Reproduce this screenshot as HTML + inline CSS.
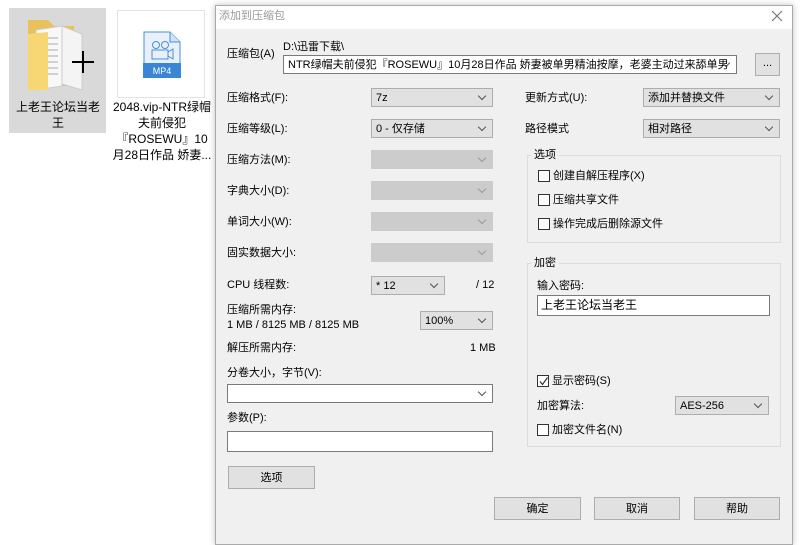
<!DOCTYPE html>
<html><head><meta charset="utf-8"><style>
*{margin:0;padding:0;box-sizing:border-box}
body{width:800px;height:532px;background:#fff;position:relative;overflow:hidden;font-family:"Liberation Sans","Noto Sans CJK SC",sans-serif;font-size:11px;color:#000;line-height:13px}
.a{position:absolute;white-space:nowrap}
.L{margin-top:2px}
.cb{position:absolute;height:19px;border:1px solid #adadad;background:#e1e1e1;padding:3px 0 0 4px;line-height:13px;font-size:11px;white-space:nowrap}
.cb.w{background:#fff;border-color:#7a7a7a}
.cb.d{background:#cccccc;border-color:#cccccc}
.cb:after{content:"";position:absolute;right:7px;top:4px;width:5px;height:5px;border-right:1px solid #555;border-bottom:1px solid #555;transform:rotate(45deg)}
.cb.d:after{border-color:#999}
.btn{position:absolute;height:23px;border:1px solid #adadad;background:#e1e1e1;text-align:center;line-height:22px}
.chk{position:absolute;width:12px;height:12px;border:1px solid #333;background:#fff}
.grp{position:absolute;border:1px solid #dcdcdc}
.gt{position:absolute;background:#f0f0f0;padding:0 3px}
</style></head><body>
<div class="a" style="left:9px;top:8px;width:97px;height:125px;background:#d9d9d9"></div>
<svg class="a" style="left:22px;top:14px" width="75" height="80" viewBox="0 0 75 80">
<path d="M6 6 h20 l6 6 h20 v60 h-46z" fill="#e9c15a"/>
<path d="M40 12 l20 8 v56 l-20 -6z" fill="#f4f4f4" stroke="#ccc"/>
<path d="M14 16 l26 -4 v60 l-26 4z" fill="#f8f8f8" stroke="#ccc"/>
<g stroke="#aaa" stroke-width="1"><path d="M18 24h18M18 30h18M18 36h18M18 42h18M18 48h18M18 54h18M18 60h18"/></g>
<path d="M6 20 l20 -2 v58 h-20z" fill="#f7d774"/>
<path d="M50 48h22M61 37v22" stroke="#000" stroke-width="2"/>
</svg>
<div class="a" style="left:14px;top:99px;width:88px;text-align:center;white-space:normal;font-size:12px;line-height:16px">上老王论坛当老王</div>
<div class="a" style="left:117px;top:10px;width:88px;height:88px;background:#fff;border:1px solid #e3e3e3"></div>
<svg class="a" style="left:143px;top:31px" width="38" height="47" viewBox="0 0 38 47">
<path d="M1 1h26l10 10v35h-36z" fill="#e8f1fb" stroke="#4a8fd8"/>
<path d="M27 1v10h10" fill="#cfe2f7" stroke="#4a8fd8"/>
<circle cx="13" cy="14" r="3.5" fill="none" stroke="#4a8fd8"/><circle cx="22" cy="14" r="3.5" fill="none" stroke="#4a8fd8"/>
<rect x="9" y="19" width="16" height="9" fill="none" stroke="#4a8fd8"/><path d="M25 21l5-3v10l-5-3z" fill="none" stroke="#4a8fd8"/>
<rect x="0" y="32" width="38" height="15" fill="#3a86d6"/>
<text x="19" y="43" font-size="9" fill="#fff" text-anchor="middle" font-family="Liberation Sans">MP4</text>
</svg>
<div class="a" style="left:112px;top:99px;width:100px;text-align:center;white-space:normal;font-size:12px;line-height:16px">2048.vip-NTR绿帽夫前侵犯『ROSEWU』10月28日作品 娇妻...</div>

<div class="a" style="left:215px;top:5px;width:578px;height:540px;background:#f0f0f0;border:1px solid #aaa;box-shadow:0 0 6px rgba(0,0,0,.25)"></div>
<div class="a" style="left:216px;top:6px;width:576px;height:23px;background:#fff"></div>
<div class="a" style="left:219px;top:10px;color:#999;font-size:11px">添加到压缩包</div>
<svg class="a" style="left:771px;top:10px" width="12" height="12"><path d="M1 1L11 11M11 1L1 11" stroke="#777" stroke-width="1.2"/></svg>

<div class="a L" style="left:227px;top:46px">压缩包(A)</div>
<div class="a L" style="left:283px;top:39px">D:\迅雷下载\</div>
<div class="cb w" style="left:283px;top:55px;width:454px;overflow:hidden;padding-right:20px">NTR绿帽夫前侵犯『ROSEWU』10月28日作品 娇妻被单男精油按摩，老婆主动过来舔单男</div>
<div class="btn" style="left:755px;top:53px;width:25px;line-height:19px">...</div>

<div class="a L" style="left:227px;top:90px">压缩格式(F):</div><div class="cb" style="left:371px;top:88px;width:122px">7z</div>
<div class="a L" style="left:227px;top:121px">压缩等级(L):</div><div class="cb" style="left:371px;top:119px;width:122px">0 - 仅存储</div>
<div class="a L" style="left:227px;top:152px">压缩方法(M):</div><div class="cb d" style="left:371px;top:150px;width:122px"></div>
<div class="a L" style="left:227px;top:183px">字典大小(D):</div><div class="cb d" style="left:371px;top:181px;width:122px"></div>
<div class="a L" style="left:227px;top:214px">单词大小(W):</div><div class="cb d" style="left:371px;top:212px;width:122px"></div>
<div class="a L" style="left:227px;top:245px">固实数据大小:</div><div class="cb d" style="left:371px;top:243px;width:122px"></div>
<div class="a L" style="left:227px;top:277px">CPU 线程数:</div><div class="cb" style="left:371px;top:276px;width:74px">* 12</div>
<div class="a L" style="left:476px;top:277px">/ 12</div>
<div class="a L" style="left:227px;top:302px">压缩所需内存:</div>
<div class="a L" style="left:227px;top:317px">1 MB / 8125 MB / 8125 MB</div>
<div class="cb" style="left:420px;top:311px;width:73px">100%</div>
<div class="a L" style="left:227px;top:340px">解压所需内存:</div><div class="a L" style="left:470px;top:340px">1 MB</div>
<div class="a L" style="left:227px;top:365px">分卷大小，字节(V):</div>
<div class="cb w" style="left:227px;top:384px;width:266px"></div>
<div class="a L" style="left:227px;top:410px">参数(P):</div>
<div class="a" style="left:227px;top:431px;width:266px;height:21px;background:#fff;border:1px solid #7a7a7a"></div>
<div class="btn" style="left:228px;top:466px;width:87px">选项</div>

<div class="a L" style="left:525px;top:90px">更新方式(U):</div><div class="cb" style="left:643px;top:88px;width:137px">添加并替换文件</div>
<div class="a L" style="left:525px;top:121px">路径模式</div><div class="cb" style="left:643px;top:119px;width:137px">相对路径</div>

<div class="grp" style="left:527px;top:155px;width:254px;height:88px"></div>
<div class="gt L" style="left:531px;top:147px">选项</div>
<div class="chk" style="left:538px;top:170px"></div><div class="a L" style="left:553px;top:168px">创建自解压程序(X)</div>
<div class="chk" style="left:538px;top:194px"></div><div class="a L" style="left:553px;top:192px">压缩共享文件</div>
<div class="chk" style="left:538px;top:218px"></div><div class="a L" style="left:553px;top:216px">操作完成后删除源文件</div>

<div class="grp" style="left:527px;top:263px;width:254px;height:184px"></div>
<div class="gt L" style="left:531px;top:255px">加密</div>
<div class="a L" style="left:537px;top:278px">输入密码:</div>
<div class="a" style="left:537px;top:295px;width:233px;height:21px;background:#fff;border:1px solid #7a7a7a;padding:2px 0 0 3px;line-height:15px;font-size:12px">上老王论坛当老王</div>
<div class="chk" style="left:537px;top:375px;border-color:#333"></div>
<svg class="a" style="left:538px;top:376px" width="11" height="11"><path d="M2 5.5L4.5 8.5L9.5 1.5" stroke="#222" stroke-width="1.1" fill="none"/></svg>
<div class="a L" style="left:552px;top:373px">显示密码(S)</div>
<div class="a L" style="left:537px;top:398px">加密算法:</div><div class="cb" style="left:675px;top:396px;width:94px">AES-256</div>
<div class="chk" style="left:537px;top:424px"></div><div class="a L" style="left:552px;top:422px">加密文件名(N)</div>

<div class="btn" style="left:494px;top:497px;width:87px">确定</div>
<div class="btn" style="left:594px;top:497px;width:86px">取消</div>
<div class="btn" style="left:694px;top:497px;width:86px">帮助</div>
</body></html>
